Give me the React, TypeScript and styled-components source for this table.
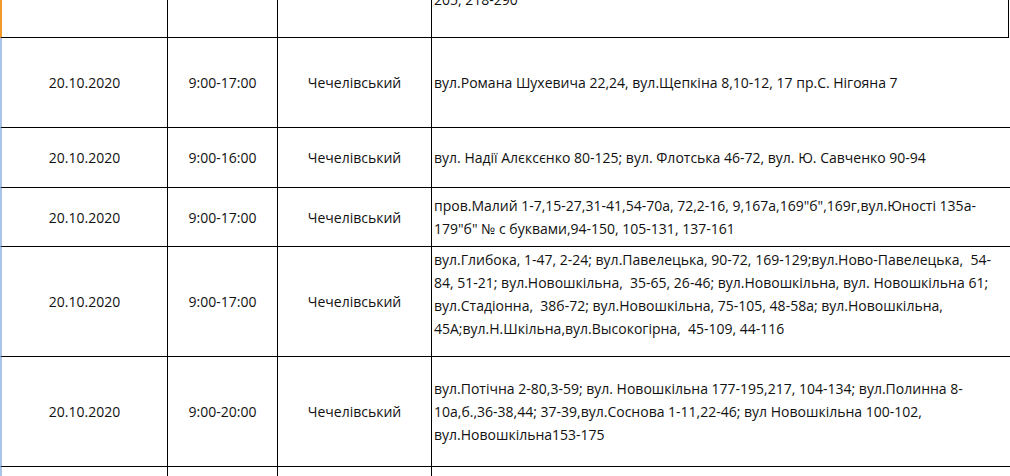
import styled, { createGlobalStyle } from "styled-components";

const GlobalStyle = createGlobalStyle`
  html, body {
    margin: 0;
    padding: 0;
    background: #ffffff;
    overflow: hidden;
  }
  body {
    font-family: "Open Sans", "Noto Sans", sans-serif;
    font-size: 14px;
    color: #111;
  }
`;

const Sheet = styled.div`
  width: 1010px;
  height: 476px;
  overflow: hidden;
  display: flex;
  flex-direction: column;
`;

const Row = styled.div<{ $h: number; $marker: string; $closed?: boolean }>`
  display: grid;
  grid-template-columns: 166px 110px 154px 1fr;
  flex: 0 0 ${(p) => p.$h}px;
  height: ${(p) => p.$h}px;
  border-bottom: 1px solid #000;
  border-left: 2px solid ${(p) => p.$marker};
  box-sizing: border-box;
  margin-right: ${(p) => (p.$closed ? "1px" : "0")};
`;

const Cell = styled.div<{ $last?: boolean; $closed?: boolean }>`
  display: flex;
  align-items: center;
  justify-content: center;
  border-right: ${(p) => (p.$last && !p.$closed ? "none" : "1px solid #000")};
  box-sizing: border-box;
  white-space: nowrap;
`;

const AddressCell = styled(Cell)<{ $top?: boolean }>`
  flex-direction: column;
  align-items: flex-start;
  justify-content: ${(p) => (p.$top ? "flex-start" : "center")};
  padding: ${(p) => (p.$top ? "1px 4px 0 2px" : "0 4px 0 2px")};
  overflow: hidden;
`;

const Line = styled.div`
  line-height: 23px;
  white-space: pre;
`;

// last line of the row above, scrolled mostly out of view
const CutLine = styled(Line)`
  margin-top: -13px;
`;

type Entry = {
  h: number;
  date: string;
  time: string;
  district: string;
  lines: string[];
  top?: boolean;
};

const entries: Entry[] = [
  {
    h: 90,
    date: "20.10.2020",
    time: "9:00-17:00",
    district: "Чечелівський",
    lines: ["вул.Романа Шухевича 22,24, вул.Щепкіна 8,10-12, 17 пр.С. Нігояна 7"],
  },
  {
    h: 60,
    date: "20.10.2020",
    time: "9:00-16:00",
    district: "Чечелівський",
    lines: ["вул. Надії Алєксєнко 80-125; вул. Флотська 46-72, вул. Ю. Савченко 90-94"],
  },
  {
    h: 59,
    date: "20.10.2020",
    time: "9:00-17:00",
    district: "Чечелівський",
    lines: [
      'пров.Малий 1-7,15-27,31-41,54-70а, 72,2-16, 9,167а,169"б",169г,вул.Юності 135а-',
      '179"б" № с буквами,94-150, 105-131, 137-161',
    ],
  },
  {
    h: 110,
    date: "20.10.2020",
    time: "9:00-17:00",
    district: "Чечелівський",
    top: true,
    lines: [
      "вул.Глибока, 1-47, 2-24; вул.Павелецька, 90-72, 169-129;вул.Ново-Павелецька,  54-",
      "84, 51-21; вул.Новошкільна,  35-65, 26-46; вул.Новошкільна, вул. Новошкільна 61;",
      "вул.Стадіонна,  38б-72; вул.Новошкільна, 75-105, 48-58а; вул.Новошкільна,",
      "45А;вул.Н.Шкільна,вул.Высокогірна,  45-109, 44-116",
    ],
  },
  {
    h: 110,
    date: "20.10.2020",
    time: "9:00-20:00",
    district: "Чечелівський",
    lines: [
      "вул.Потічна 2-80,3-59; вул. Новошкільна 177-195,217, 104-134; вул.Полинна 8-",
      "10а,б.,36-38,44; 37-39,вул.Соснова 1-11,22-46; вул Новошкільна 100-102,",
      "вул.Новошкільна153-175",
    ],
  },
];

export default function App() {
  return (
    <>
      <GlobalStyle />
      <Sheet>
        <Row $h={38} $marker="#f39a2b" $closed>
          <Cell />
          <Cell />
          <Cell />
          <AddressCell $last $closed $top>
            <CutLine>205, 218-290</CutLine>
          </AddressCell>
        </Row>
        {entries.map((e, i) => (
          <Row key={i} $h={e.h} $marker="#a9c4e8">
            <Cell>{e.date}</Cell>
            <Cell>{e.time}</Cell>
            <Cell>{e.district}</Cell>
            <AddressCell $last $top={e.top}>
              {e.lines.map((l, j) => (
                <Line key={j}>{l}</Line>
              ))}
            </AddressCell>
          </Row>
        ))}
        <Row $h={20} $marker="#a9c4e8">
          <Cell />
          <Cell />
          <Cell />
          <AddressCell $last />
        </Row>
      </Sheet>
    </>
  );
}
